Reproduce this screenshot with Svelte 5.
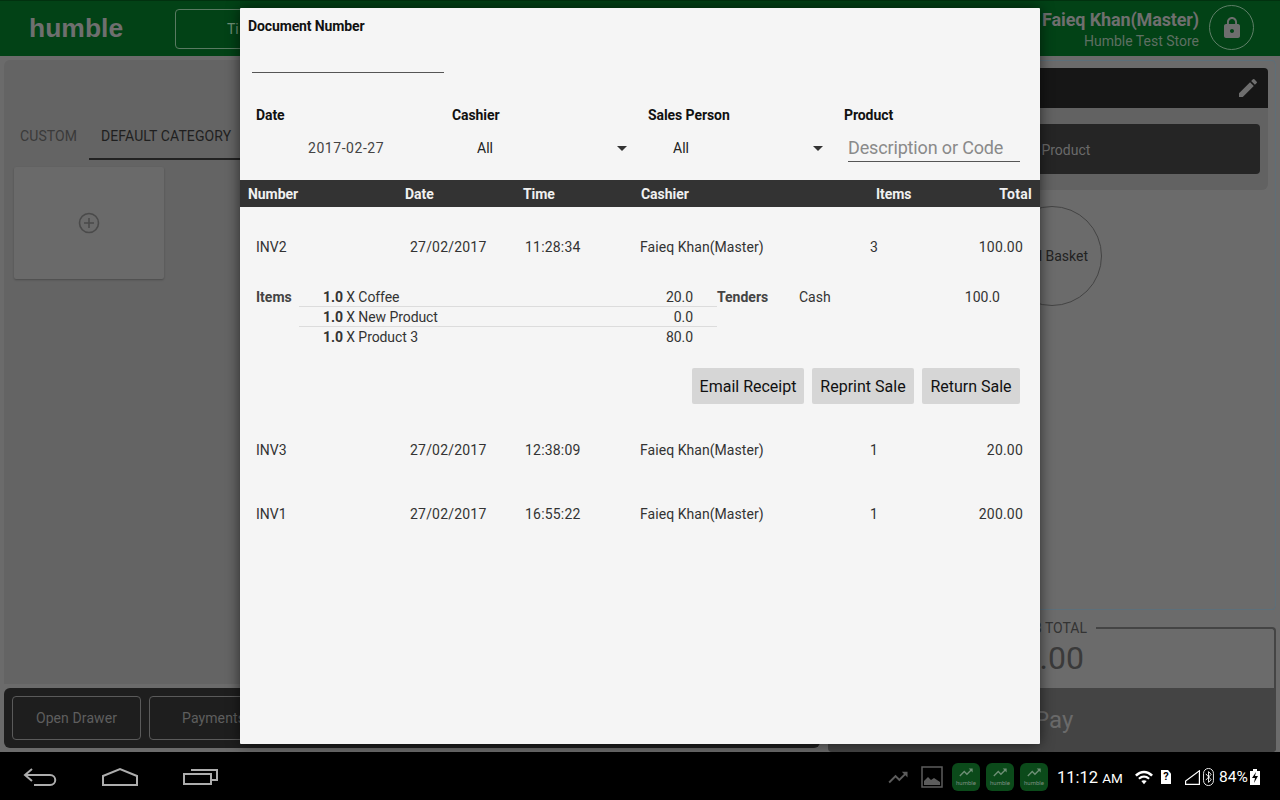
<script lang="ts">
    const sales = [
        { no: "INV2", date: "27/02/2017", time: "11:28:34", cashier: "Faieq Khan(Master)", items: 3, total: "100.00", open: true },
        { no: "INV3", date: "27/02/2017", time: "12:38:09", cashier: "Faieq Khan(Master)", items: 1, total: "20.00", open: false },
        { no: "INV1", date: "27/02/2017", time: "16:55:22", cashier: "Faieq Khan(Master)", items: 1, total: "200.00", open: false },
    ];
    const lines = [
        { qty: "1.0", name: "Coffee", price: "20.0" },
        { qty: "1.0", name: "New Product", price: "0.0" },
        { qty: "1.0", name: "Product 3", price: "80.0" },
    ];
    // material trending_up
    const trend = "M16 6l2.29 2.29-4.88 4.88-4-4L2 16.59 3.41 18l6-6 4 4 6.3-6.29L22 12V6z";
</script>

<div class="screen">
    <div class="app">
        <header class="topbar">
            <div class="logo">humble</div>
            <div class="tab-btn">Ti</div>
            <div class="spacer"></div>
            <div class="user">
                <div class="user-name">Faieq Khan(Master)</div>
                <div class="user-store">Humble Test Store</div>
            </div>
            <div class="lock">
                <svg width="24" height="24" viewBox="0 0 24 24"><path fill="#6e6e6e" d="M18 8h-1V6c0-2.76-2.24-5-5-5S7 3.24 7 6v2H6c-1.1 0-2 .9-2 2v10c0 1.1.9 2 2 2h12c1.1 0 2-.9 2-2V10c0-1.1-.9-2-2-2zm-6 9c-1.1 0-2-.9-2-2s.9-2 2-2 2 .9 2 2-.9 2-2 2zm3.1-9H8.9V6c0-1.71 1.39-3.1 3.1-3.1 1.71 0 3.1 1.39 3.1 3.1v2z"/></svg>
            </div>
        </header>

        <div class="content">
            <div class="left">
                <section class="catalog">
                    <div class="tabs">
                        <div class="tab">CUSTOM</div>
                        <div class="tab active">DEFAULT CATEGORY</div>
                    </div>
                    <div class="add-card">
                        <svg width="22" height="22" viewBox="0 0 22 22" fill="none" stroke="#4a4a4a"><circle cx="11" cy="11" r="9.5" stroke-width="1.6"/><path d="M11 6v10M6 11h10" stroke-width="1.6"/></svg>
                    </div>
                </section>
                <div class="actions">
                    <div class="action">Open Drawer</div>
                    <div class="action">Payments</div>
                </div>
            </div>

            <div class="right">
                <section class="basket">
                    <div class="basket-head">
                        <svg width="24" height="24" viewBox="0 0 24 24"><path fill="#6e6e6e" d="M3 17.25V21h3.75L17.81 9.94l-3.75-3.75L3 17.25zM20.71 7.04a1 1 0 0 0 0-1.41l-2.34-2.34a1 1 0 0 0-1.41 0l-1.83 1.83 3.75 3.75 1.83-1.83z"/></svg>
                    </div>
                    <div class="product-wrap">
                        <div class="product-btn">Add Product</div>
                    </div>
                    <div class="circle">Full Basket</div>
                </section>
                <section class="totals">
                    <div class="sub-box">
                        <div class="sub-label"><span>SUB TOTAL</span></div>
                        <div class="amount">320.00</div>
                        <div class="pay">Pay</div>
                    </div>
                </section>
            </div>
        </div>
    </div>

    <nav class="navbar">
        <div class="nav-keys">
            <svg width="34" height="20" viewBox="0 0 34 20" fill="none" stroke="#adadad" stroke-width="2"><path d="M9 2 L2 8 L9 14 M2 8 H27 C34 8 34 18 27 18 H11"/></svg>
            <svg width="38" height="20" viewBox="0 0 38 20" fill="none" stroke="#adadad" stroke-width="2"><path d="M2 18 V9 L19 2 L36 9 V18 Z"/></svg>
            <svg width="36" height="18" viewBox="0 0 36 18" fill="none" stroke="#adadad" stroke-width="2"><rect x="1" y="6" width="27" height="10"/><path d="M8 2 H34 V12 H29"/></svg>
        </div>
        <div class="spacer"></div>
        <div class="status">
            <svg width="20" height="13" viewBox="1.5 5.5 21 13"><path fill="#5c5c5c" d={trend}/></svg>
            <svg class="st-image" width="22" height="22" viewBox="0 0 22 22"><rect x="1" y="1" width="20" height="20" fill="none" stroke="#5c5c5c" stroke-width="1.5"/><path fill="#5c5c5c" d="M3 19v-4l4-4 3 3 3-2 6 4v3z"/></svg>
            <div class="tiles">
                {#each [0, 1, 2] as t (t)}
                    <div class="tile">
                        <svg width="14" height="9" viewBox="1.5 5.5 21 13"><path fill="#6f8f76" d={trend}/></svg>
                        <span>humble</span>
                    </div>
                {/each}
            </div>
            <div class="clock">11:12 <small>AM</small></div>
            <svg class="st-wifi" width="18" height="15" viewBox="0 0 20 16"><path fill="#fff" d="M0 5 C6 -1 14 -1 20 5 L18 7 C13 2 7 2 2 7 Z M3.5 8.5 C7.5 4.8 12.5 4.8 16.5 8.5 L14.8 10.2 C12 7.6 8 7.6 5.2 10.2 Z M7 12 C8.8 10.6 11.2 10.6 13 12 L10 15.5 Z"/></svg>
            <div class="sim">?</div>
            <svg class="st-signal" width="15" height="15" viewBox="0 0 15 15" fill="none" stroke="#fff" stroke-width="1.2"><path d="M14.4 .8 V14.4 H.6 V11 Z"/></svg>
            <svg class="st-bt" width="11" height="18" viewBox="0 0 12 20" fill="none" stroke="#fff" stroke-width="1"><rect x=".5" y=".5" width="11" height="19" rx="5.5"/><path d="M3 6.5 L9 13 L6 16 V4 L9 7 L3 13.5"/></svg>
            <div class="battery-pct">84%</div>
            <svg class="st-bat" width="10" height="16" viewBox="0 0 10 16"><path fill="#fff" d="M3 0h4v2h3v14H0V2h3z"/><path fill="#000" d="M6 3 L2 9 H5 L4 14 L8 7 H5 Z"/></svg>
        </div>
    </nav>

    <div class="modal">
        <div class="doc-label">Document Number</div>
        <div class="doc-input"></div>

        <div class="filters">
            <div class="filter">
                <div class="filter-label">Date</div>
                <div class="filter-date">2017-02-27</div>
            </div>
            <div class="filter">
                <div class="filter-label">Cashier</div>
                <div class="select"><span>All</span><i class="caret"></i></div>
            </div>
            <div class="filter">
                <div class="filter-label">Sales Person</div>
                <div class="select"><span>All</span><i class="caret"></i></div>
            </div>
            <div class="filter">
                <div class="filter-label">Product</div>
                <div class="search">Description or Code</div>
            </div>
        </div>

        <div class="thead">
            <div>Number</div>
            <div>Date</div>
            <div>Time</div>
            <div>Cashier</div>
            <div>Items</div>
            <div class="right-align">Total</div>
        </div>

        {#each sales as s (s.no)}
            <div class="sale" class:first={s.open}>
                <div>{s.no}</div>
                <div class="digits">{s.date}</div>
                <div class="digits">{s.time}</div>
                <div class="name">{s.cashier}</div>
                <div class="center-align">{s.items}</div>
                <div class="right-align digits">{s.total}</div>
            </div>
            {#if s.open}
                <div class="detail">
                    <div class="detail-label">Items</div>
                    <div class="lines">
                        {#each lines as l (l.name)}
                            <div class="line">
                                <div><b>{l.qty}</b> X {l.name}</div>
                                <div>{l.price}</div>
                            </div>
                        {/each}
                    </div>
                    <div class="tender-label">Tenders</div>
                    <div class="tender-name">Cash</div>
                    <div class="tender-amount">100.0</div>
                </div>
                <div class="buttons">
                    <button class="w-email">Email Receipt</button>
                    <button class="w-reprint">Reprint Sale</button>
                    <button class="w-return">Return Sale</button>
                </div>
            {/if}
        {/each}
    </div>
</div>

<style>
    :global(body) {
        margin: 0;
    }

    .screen {
        position: relative;
        width: 1280px;
        height: 800px;
        overflow: hidden;
        display: flex;
        flex-direction: column;
        background: #000;
        font-family: Roboto, "Liberation Sans", sans-serif;
        font-size: 14px;
    }

    .app {
        height: 752px;
        display: flex;
        flex-direction: column;
        background: #6b6b6b;
    }

    .spacer {
        flex: 1;
    }

    .topbar {
        height: 56px;
        flex: none;
        display: flex;
        align-items: center;
        box-sizing: border-box;
        background: #024216;
        border-top: 1px solid #01310f;
    }

    .logo {
        margin-left: 29px;
        width: 146px;
        font-family: "Liberation Sans", sans-serif;
        font-size: 26.5px;
        font-weight: 700;
        color: #6f6f6f;
    }

    .tab-btn {
        width: 150px;
        height: 38px;
        padding-left: 51px;
        box-sizing: content-box;
        margin-right: -51px;
        line-height: 38px;
        border: 1px solid #5a7a62;
        border-radius: 4px;
        color: #6f8f76;
    }

    .user {
        padding-top: 2px;
        text-align: right;
    }

    .user-name {
        font-size: 18px;
        font-weight: 700;
        line-height: 22px;
        letter-spacing: -0.13px;
        color: #6f6f6f;
    }

    .user-store {
        font-size: 14px;
        line-height: 20px;
        color: #5f6f63;
    }

    .lock {
        width: 45px;
        height: 45px;
        margin: -2px 26px 0 10px;
        display: flex;
        align-items: center;
        justify-content: center;
        box-sizing: border-box;
        border: 1px solid #5f7f68;
        border-radius: 50%;
    }

    .content {
        flex: 1;
        display: flex;
        min-height: 0;
    }

    .left {
        width: 816px;
        margin: 4px 0 0 4px;
        display: flex;
        flex-direction: column;
    }

    .catalog {
        flex: 1;
        padding: 0 10px;
        background: #646464;
        border-radius: 6px 6px 0 0;
    }

    .tabs {
        display: flex;
        height: 46px;
        margin: 54px 0 0 -10px;
        box-sizing: border-box;
    }

    .tab {
        width: 85px;
        padding: 14px 0 0 16px;
        letter-spacing: 0.1px;
        color: #3a3a3a;
        box-sizing: border-box;
    }

    .active {
        padding: 14px 12px 0;
        width: 400px;
        color: #1f1f1f;
        border-bottom: 2px solid #222;
    }

    .add-card {
        width: 150px;
        height: 112px;
        margin-top: 7px;
        display: flex;
        align-items: center;
        justify-content: center;
        background: #6a6a6a;
        border-radius: 2px;
        box-shadow: 0 1px 2px rgba(0, 0, 0, 0.25);
    }

    .actions {
        height: 60px;
        flex: none;
        display: flex;
        gap: 8px;
        margin-top: 4px;
        margin-bottom: 4px;
        padding: 8px;
        box-sizing: border-box;
        background: #1e1e1e;
        border-radius: 6px;
    }

    .action {
        width: 129px;
        line-height: 42px;
        text-align: center;
        box-sizing: border-box;
        border: 1px solid #5a5a5a;
        border-radius: 4px;
        letter-spacing: 0.1px;
        color: #5e5e5e;
    }

    .right {
        width: 448px;
        margin: 4px 4px 0 8px;
        display: flex;
        flex-direction: column;
    }

    .basket {
        height: 550px;
        flex: none;
        padding: 7px;
        box-sizing: border-box;
        background: #6b6b6b;
        border: 1px solid #5c6f7a;
        border-radius: 4px;
        display: flex;
        flex-direction: column;
    }

    .basket-head {
        height: 40px;
        display: flex;
        align-items: center;
        justify-content: flex-end;
        padding-right: 8px;
        background: #161616;
        border-radius: 4px 4px 0 0;
    }

    .basket-head svg {
        margin-top: -1px;
    }

    .product-wrap {
        padding: 16px 8px;
        background: #626262;
        border-radius: 0 0 6px 6px;
    }

    .product-btn {
        height: 50px;
        line-height: 52px;
        padding-left: 169px;
        background: #252525;
        border-radius: 4px;
        color: #6a6a6a;
    }

    .circle {
        width: 100px;
        height: 100px;
        margin: 16px 0 0 166px;
        padding-left: 4px;
        display: flex;
        align-items: center;
        justify-content: center;
        box-sizing: border-box;
        white-space: nowrap;
        border: 1px solid #444;
        border-radius: 50%;
        color: #222;
    }

    .totals {
        margin-top: 17px;
        flex: 1;
        display: flex;
        flex-direction: column;
    }

    .sub-box {
        position: relative;
        flex: 1;
        display: flex;
        flex-direction: column;
        margin-bottom: 4px;
        border-top: 2px solid #444;
        border-right: 2px solid #444;
        border-radius: 0 4px 4px 0;
    }

    .sub-label {
        position: absolute;
        left: 0;
        top: -10px;
        width: 268px;
        text-align: right;
        background: #6b6b6b;
        padding-right: 9px;
        box-sizing: border-box;
        color: #333;
        line-height: 18px;
        white-space: nowrap;
    }

    .amount {
        height: 59px;
        width: 256px;
        padding-top: 11px;
        box-sizing: border-box;
        text-align: right;
        font-size: 32px;
        line-height: 36px;
        color: #3a3a3a;
    }

    .pay {
        flex: 1;
        margin-right: -2px;
        padding-left: 206px;
        background: #444;
        border-radius: 0 0 4px 4px;
        font-size: 24px;
        line-height: 64px;
        color: #6a6a6a;
    }

    .navbar {
        height: 48px;
        flex: none;
        display: flex;
        align-items: center;
        background: #000;
    }

    .nav-keys {
        display: flex;
        align-items: center;
        margin-left: 23px;
        gap: 44px;
        padding-top: 2px;
    }

    .status {
        display: flex;
        align-items: center;
        margin-right: 20px;
        padding-top: 2px;
        color: #fff;
    }

    .st-image {
        margin-left: 13px;
    }

    .tiles {
        display: flex;
        gap: 6px;
        margin-left: 9px;
    }

    .tile {
        width: 28px;
        height: 28px;
        display: flex;
        flex-direction: column;
        align-items: center;
        justify-content: center;
        gap: 2px;
        background: #0b4a1a;
        border-radius: 6px;
    }

    .tile span {
        font-size: 6px;
        line-height: 7px;
        color: #7c8f80;
    }

    .clock {
        width: 64px;
        margin-left: 9px;
        font-size: 16.5px;
        white-space: nowrap;
    }

    .clock small {
        font-size: 13.5px;
    }

    .st-wifi {
        margin-left: 14px;
    }

    .sim {
        width: 10px;
        height: 14px;
        margin-left: 8px;
        background: #fff;
        color: #000;
        clip-path: polygon(0 0, 70% 0, 100% 25%, 100% 100%, 0 100%);
        font-size: 11px;
        font-weight: 700;
        line-height: 14px;
        text-align: center;
    }

    .st-signal {
        margin-left: 14px;
    }

    .st-bt {
        margin-left: 3px;
    }

    .battery-pct {
        width: 29px;
        margin-left: 5px;
        font-size: 15.5px;
        white-space: nowrap;
    }

    .st-bat {
        margin-left: 2px;
    }

    .modal {
        position: absolute;
        left: 240px;
        top: 8px;
        width: 800px;
        height: 736px;
        overflow: hidden;
        background: #f5f5f5;
        box-shadow: 0 0 14px rgba(0, 0, 0, 0.6);
        border-radius: 1px;
        color: #333;
    }

    .doc-label {
        padding: 10px 8px 0;
        line-height: 17px;
        font-weight: 700;
        letter-spacing: -0.12px;
        color: #111;
    }

    .doc-input {
        width: 192px;
        height: 1px;
        margin: 37px 0 0 12px;
        background: #555;
    }

    .filters {
        display: grid;
        grid-template-columns: repeat(4, 196px);
        margin: 0 0 0 16px;
        padding-top: 34px;
        height: 107px;
        box-sizing: border-box;
    }

    .filter-label {
        font-weight: 700;
        line-height: 17px;
        letter-spacing: -0.08px;
        color: #111;
    }

    .filter-date {
        margin-top: 16px;
        padding-left: 52px;
        line-height: 17px;
        color: #444;
        letter-spacing: 0.55px;
    }

    .select {
        display: flex;
        justify-content: space-between;
        align-items: center;
        margin-top: 15px;
        height: 17px;
        padding: 0 21px 0 25px;
        color: #222;
    }

    .caret {
        width: 0;
        height: 0;
        margin-top: 2px;
        border-left: 5px solid transparent;
        border-right: 5px solid transparent;
        border-top: 5px solid #333;
    }

    .search {
        width: 172px;
        height: 30px;
        margin: 8px 0 0 4px;
        box-sizing: border-box;
        border-bottom: 1px solid #555;
        font-size: 18px;
        line-height: 32px;
        letter-spacing: -0.15px;
        white-space: nowrap;
        color: #8a8a8a;
    }

    .thead {
        display: grid;
        grid-template-columns: 157px 118px 118px 235px 90px 1fr;
        height: 27px;
        padding: 0 8px;
        align-items: center;
        background: #333;
        color: #f0f0f0;
        font-weight: 700;
        letter-spacing: -0.05px;
    }

    .thead div:last-child {
        letter-spacing: 0.3px;
    }

    .right-align {
        text-align: right;
    }

    .center-align {
        width: 40px;
        text-align: center;
    }

    .sale {
        display: grid;
        grid-template-columns: 154px 115px 115px 214px 60px 1fr;
        height: 64px;
        padding: 0 17px 0 16px;
        align-items: center;
        color: #333;
    }

    .sale.first {
        height: 80px;
    }

    .digits {
        letter-spacing: 0.2px;
    }

    .name {
        letter-spacing: 0.05px;
    }

    .detail {
        display: flex;
        height: 60px;
        margin-left: 16px;
        line-height: 20px;
    }

    .detail-label {
        width: 43px;
        font-weight: 700;
        color: #444;
    }

    .lines {
        width: 418px;
    }

    .line {
        display: flex;
        justify-content: space-between;
        height: 20px;
        box-sizing: border-box;
        padding: 0 24px;
        border-bottom: 1px solid #dcdcdc;
        line-height: 20px;
        letter-spacing: -0.08px;
    }

    .line:last-child {
        border-bottom: 0;
    }

    .tender-label {
        width: 82px;
        font-weight: 700;
        color: #444;
    }

    .tender-name {
        width: 120px;
    }

    .tender-amount {
        width: 81px;
        text-align: right;
    }

    .buttons {
        display: flex;
        justify-content: flex-end;
        gap: 8px;
        margin: 21px 20px 14px 0;
    }

    .buttons button {
        height: 36px;
        padding: 0;
        border: 0;
        border-radius: 2px;
        background: #d6d6d6;
        color: #111;
        font-family: Roboto, "Liberation Sans", sans-serif;
        font-size: 16px;
    }

    .w-email {
        width: 112px;
    }

    .w-reprint {
        width: 102px;
    }

    .w-return {
        width: 98px;
    }
</style>
